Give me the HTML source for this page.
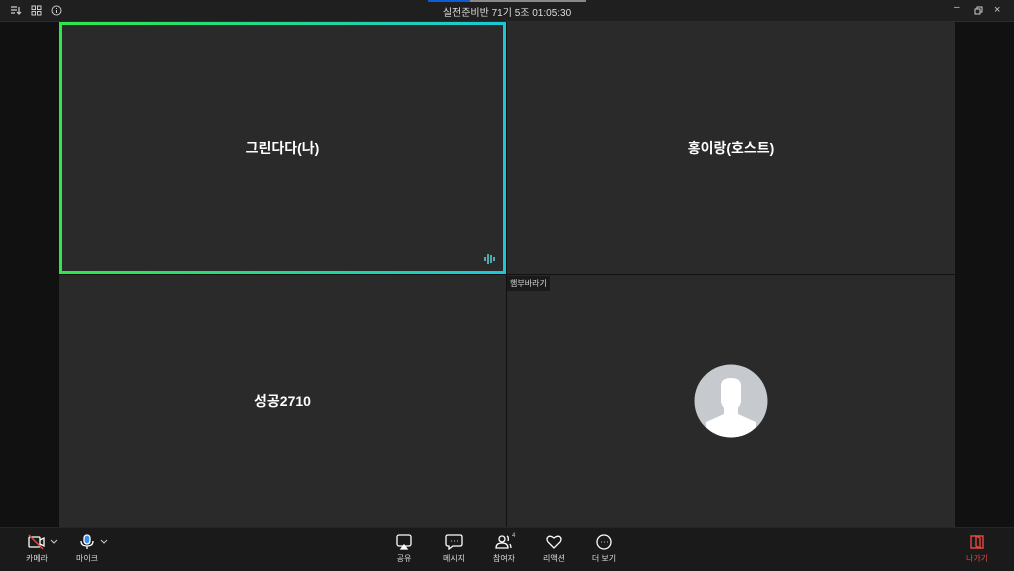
<!DOCTYPE html>
<html><head><meta charset="utf-8"><style>
body{margin:0;width:1014px;height:570px;background:#111;position:relative;overflow:hidden;font-family:"Liberation Sans","Noto Sans CJK KR",sans-serif;color:#fff}
.top{position:absolute;left:0;top:0;width:1014px;height:21px;background:#1f1f1f;border-bottom:1px solid #2c2c2c}
.title{position:absolute;left:0;width:1014px;top:4px;text-align:center;font-size:10px;color:#ddd}
.tile{position:absolute;background:#2a2a2a;display:flex;align-items:center;justify-content:center;font-size:14px;font-weight:bold;color:#fff}
.bar{position:absolute;left:0;top:527px;width:1014px;height:43px;background:#1a1a1a;border-top:1px solid #262626}
.btn{position:absolute;top:6px;width:50px;text-align:center;font-size:8px;color:#ddd}
.btn svg{display:block;margin:0 auto 3px}
</style></head><body>
<div class="top">
<div style="position:absolute;left:428px;top:0;width:42px;height:2px;background:#0b5cd5"></div>
<div style="position:absolute;left:470px;top:0;width:116px;height:2px;background:#888"></div>
<svg style="position:absolute;left:10px;top:5px" width="12" height="11" stroke="#ccc" fill="none" stroke-width="1.2"><path d="M1 2h6M1 5h6M1 8h4M9 2v7M7 7l2 2 2-2"/></svg>
<svg style="position:absolute;left:31px;top:5px" width="11" height="11" stroke="#ccc" fill="none"><rect x="1" y="1" width="3.5" height="3.5"/><rect x="6.5" y="1" width="3.5" height="3.5"/><rect x="1" y="6.5" width="3.5" height="3.5"/><rect x="6.5" y="6.5" width="3.5" height="3.5"/></svg>
<svg style="position:absolute;left:51px;top:5px" width="11" height="11" stroke="#ccc" fill="none"><circle cx="5.5" cy="5.5" r="4.5"/><path d="M5.5 5v3M5.5 3v1"/></svg>
<div class="title">실전준비반 71기 5조 01:05:30</div>
<div style="position:absolute;left:954px;top:2px;font-size:10px;color:#ccc">–</div>
<svg style="position:absolute;left:974px;top:6px" width="9" height="9" stroke="#ccc" fill="none"><rect x="1" y="3" width="5" height="5"/><path d="M3 3V1h5v5H6"/></svg>
<div style="position:absolute;left:994px;top:4px;font-size:11px;color:#ccc">×</div>
</div>
<div class="tile" style="left:59px;top:22px;width:447px;height:252px;box-sizing:border-box;border:3px solid;border-image:linear-gradient(90deg,#2ee84a,#1bc7d6) 1">그린다다(나)
<svg style="position:absolute;right:8px;bottom:6px" width="12" height="12" stroke="#5cc8d0" stroke-width="1.6"><path d="M2 4v4M5 1v10M8 2v8M11 4v4"/></svg></div>
<div class="tile" style="left:507px;top:22px;width:448px;height:252px">홍이랑(호스트)</div>
<div class="tile" style="left:59px;top:275px;width:447px;height:252px">성공2710</div>
<div class="tile" style="left:507px;top:275px;width:448px;height:252px">
<svg width="74" height="74" viewBox="0 0 74 74"><defs><clipPath id="c"><circle cx="37" cy="37" r="36.5"/></clipPath></defs><circle cx="37" cy="37" r="36.5" fill="#c6c9ce"/><g clip-path="url(#c)" fill="#fff"><path d="M27 22q0-8 10-8t10 8v16q-2 8-10 9-8-1-10-9z"/><path d="M30 44h14v6l18 8v20H12V58l18-8z"/></g></svg>
<div style="position:absolute;left:0;top:1px;background:#1a1a1a;color:#ddd;font-size:8px;font-weight:normal;padding:2px 3px">햄부바라기</div></div>
<div class="bar">
<div class="btn" style="left:12px"><svg width="18" height="16" stroke="#fff" fill="none" stroke-width="1.3"><rect x="1" y="3" width="11" height="10" rx="1"/><path d="M12 6l4-2v8l-4-2"/><path d="M1 1l14 14" stroke="#e5483c" stroke-width="1.5"/></svg>카메라</div>
<svg style="position:absolute;left:50px;top:11px" width="8" height="6" stroke="#ccc" fill="none"><path d="M1 1l3 3 3-3"/></svg>
<div class="btn" style="left:62px"><svg width="18" height="16" stroke="#fff" fill="none" stroke-width="1.3"><rect x="6" y="1" width="6" height="9" rx="3" fill="#3b8cf0" stroke="#fff"/><path d="M3 7q0 5 6 5t6-5M9 12v3"/></svg>마이크</div>
<svg style="position:absolute;left:100px;top:11px" width="8" height="6" stroke="#ccc" fill="none"><path d="M1 1l3 3 3-3"/></svg>
<div class="btn" style="left:379px"><svg width="18" height="16" stroke="#fff" fill="none" stroke-width="1.3"><rect x="2" y="1" width="14" height="11" rx="2"/><path d="M6 15l3-4 3 4z" fill="#fff"/></svg>공유</div>
<div class="btn" style="left:429px"><svg width="18" height="16" stroke="#fff" fill="none" stroke-width="1.3"><path d="M3 1h12q2 0 2 2v7q0 2-2 2H8l-4 3v-3H3q-2 0-2-2V3q0-2 2-2z"/><path d="M6 7h.5M9 7h.5M12 7h.5" stroke-width="1.5"/></svg>메시지</div>
<div class="btn" style="left:479px"><svg width="18" height="16" stroke="#fff" fill="none" stroke-width="1.3"><circle cx="7" cy="5" r="3"/><path d="M1 14q0-5 6-5t6 5zM12 2q2 1 1 5M15 10q1 2 1 4"/></svg>참여자</div>
<div style="position:absolute;left:512px;top:5px;font-size:6px;color:#ccc">4</div>
<div class="btn" style="left:529px"><svg width="18" height="16" stroke="#fff" fill="none" stroke-width="1.3"><path d="M9 14L3 8Q1 5 3 3t6 1q4-3 6-1t0 5z"/></svg>리액션</div>
<div class="btn" style="left:579px"><svg width="18" height="16" stroke="#fff" fill="none" stroke-width="1.3"><circle cx="9" cy="8" r="7"/><path d="M6 8h.5M9 8h.5M12 8h.5" stroke-width="1.5"/></svg>더 보기</div>
<div class="btn" style="left:952px;color:#e5483c"><svg width="18" height="16" stroke="#e5483c" fill="none" stroke-width="1.4"><path d="M3 2h12v12H3zM8 2l4 2v10l-4-2z"/></svg>나가기</div>
</div>
</body></html>
